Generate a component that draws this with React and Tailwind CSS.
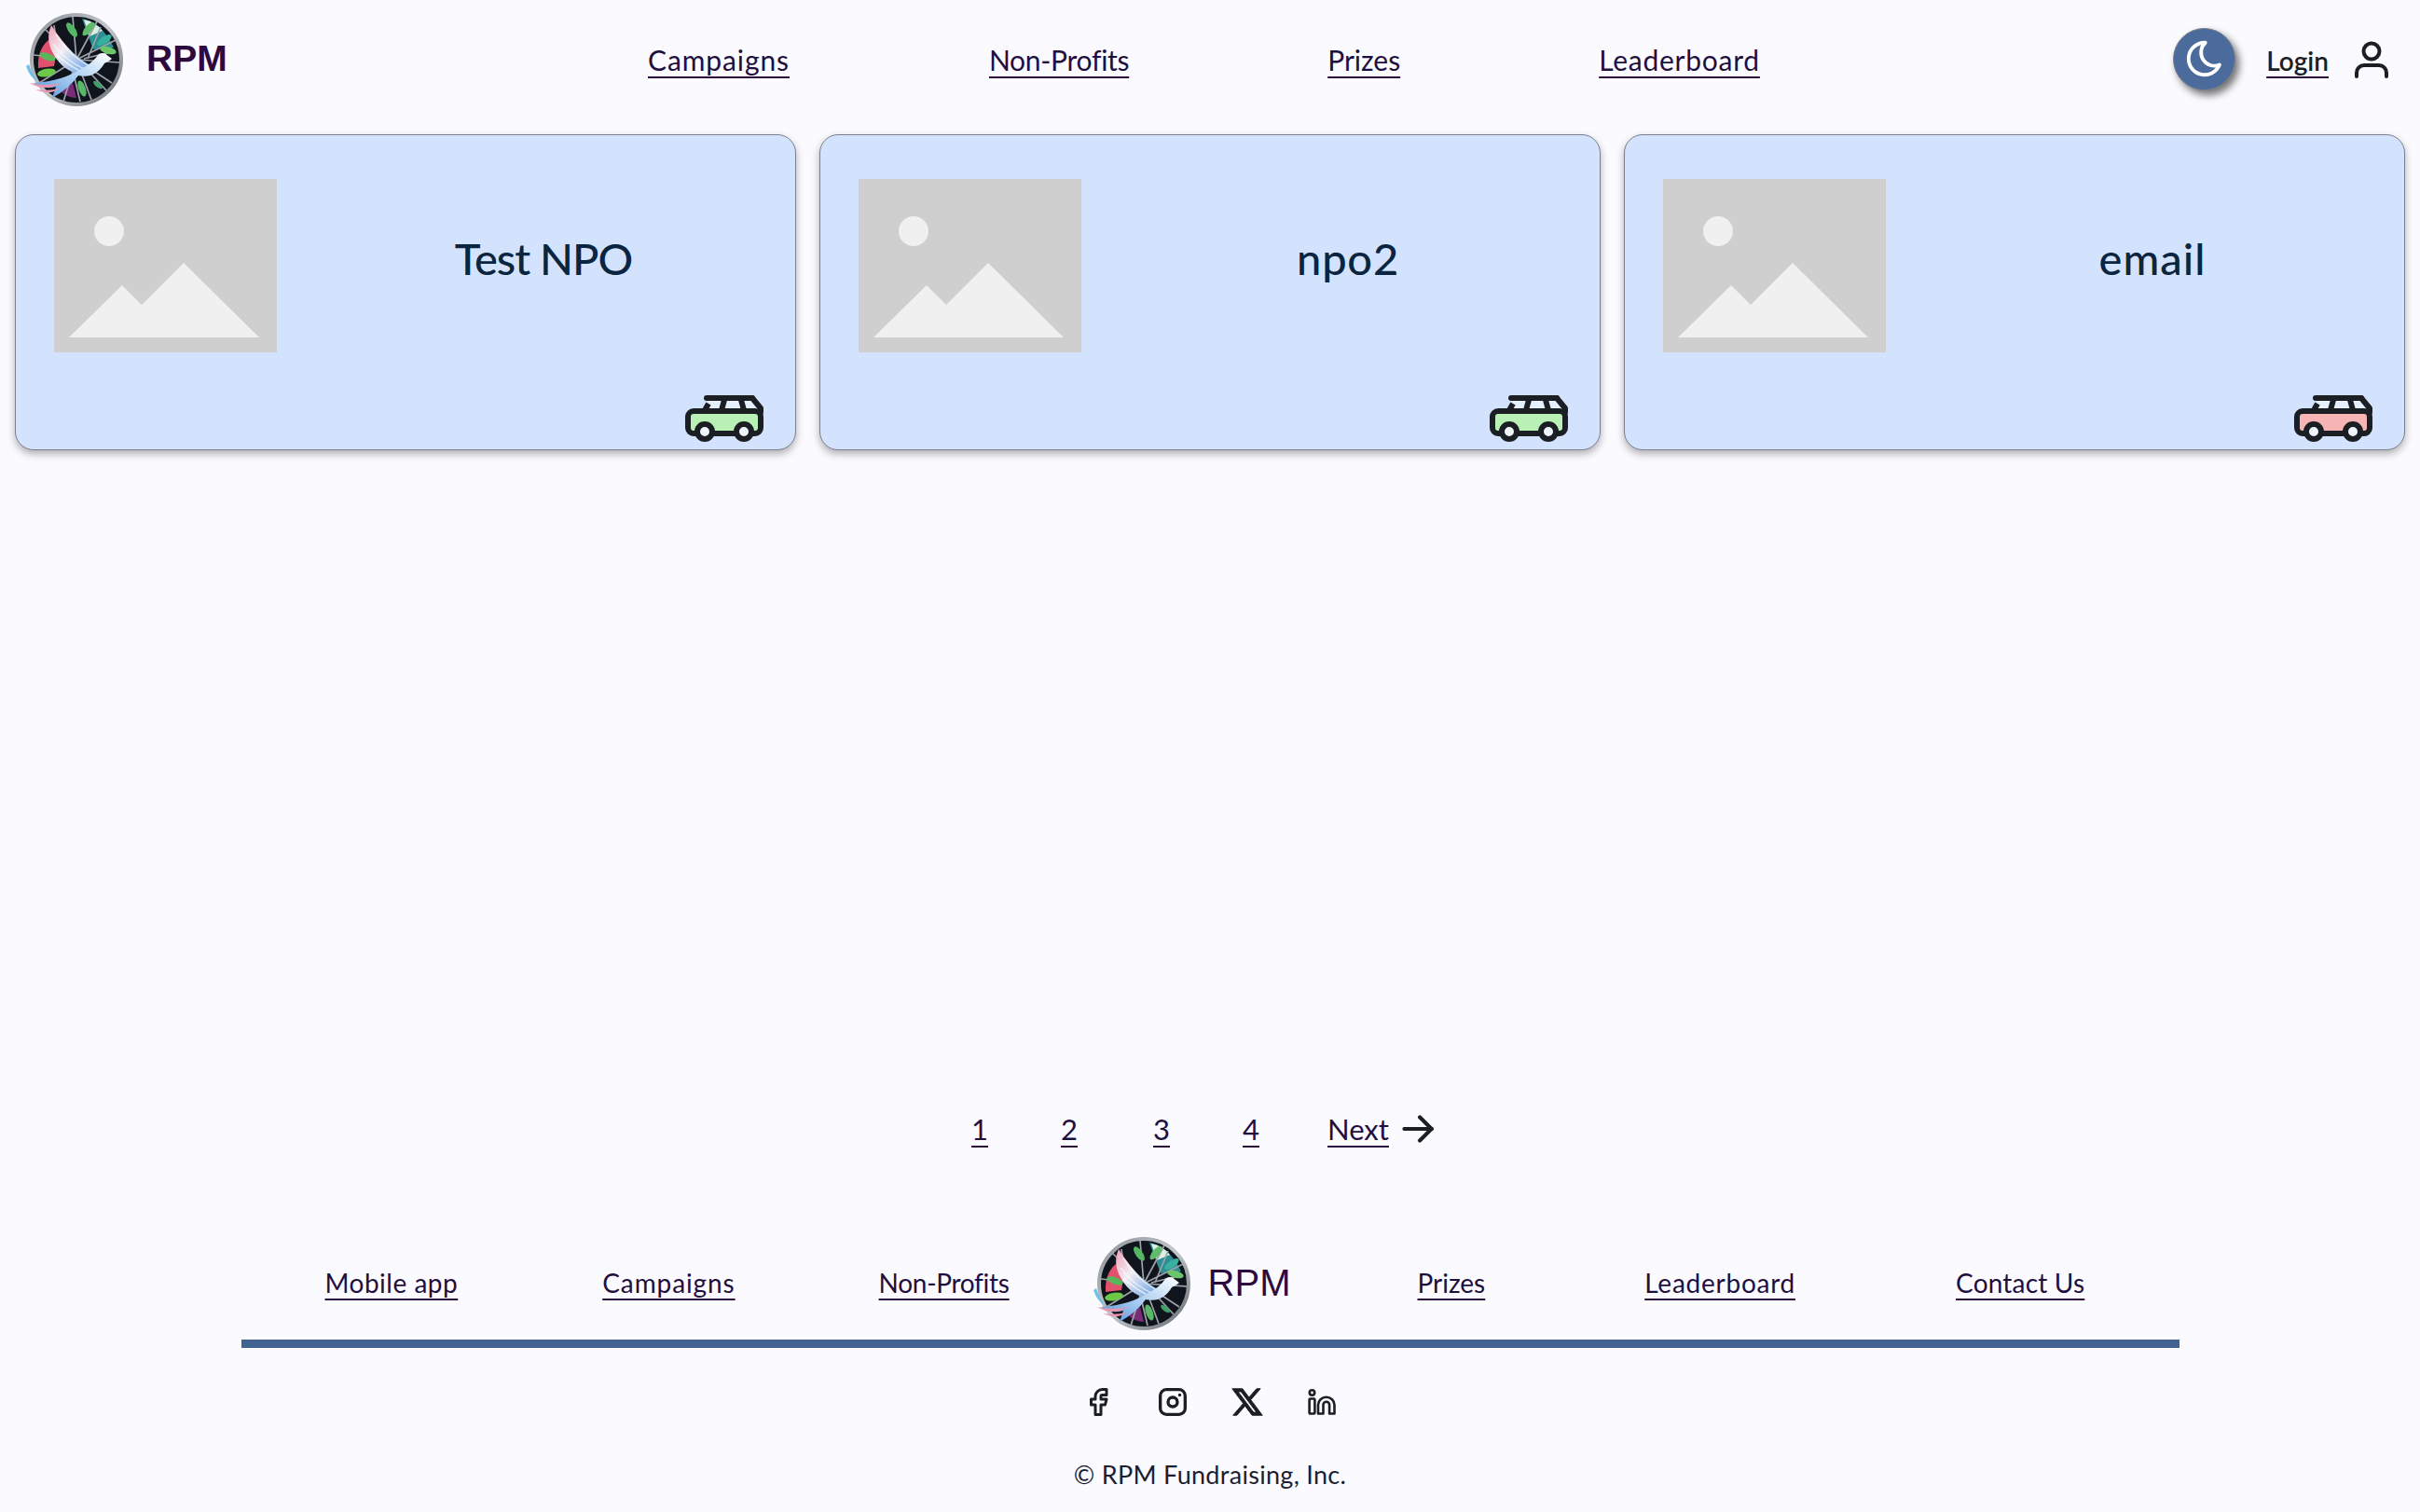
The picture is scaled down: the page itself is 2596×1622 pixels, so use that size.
import React from 'react';
import { TbArrowRight, TbBrandFacebook, TbBrandInstagram, TbMoon } from 'react-icons/tb';
import { RiTwitterXLine } from 'react-icons/ri';

const linkClass = 'text-[#1f0f3f] underline decoration-[#2d0a3d] decoration-2 underline-offset-[6px] whitespace-nowrap';

const Leaf = ({ x, y, r, c, l = 9 }) => (
  <ellipse cx={x} cy={y} rx={l} ry={l * 0.42} fill={c} transform={`rotate(${r} ${x} ${y})`} />
);

const Logo = ({ className }) => (
  <svg viewBox="0 0 106 104" className={className}>
    <defs>
      <linearGradient id="ring" x1="0" y1="0" x2="1" y2="1">
        <stop offset="0" stopColor="#8d9298" />
        <stop offset="0.5" stopColor="#c4c8cc" />
        <stop offset="1" stopColor="#63686e" />
      </linearGradient>
      <linearGradient id="wing" x1="0" y1="0" x2="1" y2="1">
        <stop offset="0" stopColor="#ee9fb4" />
        <stop offset="0.4" stopColor="#f2eef4" />
        <stop offset="1" stopColor="#4f94e0" />
      </linearGradient>
      <linearGradient id="body" x1="1" y1="0" x2="0" y2="1">
        <stop offset="0" stopColor="#ffffff" />
        <stop offset="0.6" stopColor="#9cc6ee" />
        <stop offset="1" stopColor="#4f8fd8" />
      </linearGradient>
    </defs>
    <circle cx="54" cy="51" r="48" fill="#10141d" stroke="url(#ring)" strokeWidth="4" />
    <path d="M24 30 Q12 40 13 60 L30 58 Q34 42 24 30Z" fill="#e2506e" />
    <path d="M60 7 Q82 12 94 38 L72 40Z" fill="#2b8f94" />
    <path d="M62 8 Q74 10 82 20 L68 26Z" fill="#dcefe4" />
    <path d="M36 84 Q44 92 54 92 L50 76Z" fill="#7a2c78" />
    <path d="M54 51L50 5M54 51L76 10M54 51L96 30M54 51L100 54M54 51L92 76M54 51L70 94M54 51L40 96M54 51L14 76M54 51L8 46M54 51L20 18M30 14L34 46M80 16L66 50M94 42L62 50M86 84L62 58M58 96L50 62" stroke="#9da2a8" strokeWidth="1.7" />
    <Leaf x={49} y={19} r={55} c="#55b764" />
    <Leaf x={67} y={18} r={-50} c="#5fbb6a" />
    <Leaf x={84} y={30} r={-35} c="#38b0a0" />
    <Leaf x={88} y={41} r={15} c="#6cc46c" />
    <Leaf x={23} y={48} r={20} c="#56b85a" />
    <Leaf x={22} y={65} r={-10} c="#6cc848" l={10} />
    <Leaf x={60} y={82} r={70} c="#58b868" />
    <Leaf x={77} y={78} r={40} c="#3f9e6a" l={6} />
    <path d="M72 58 Q50 50 27 14 Q20 30 30 46 Q40 64 62 68Z" fill="url(#wing)" />
    <path d="M32 24 Q44 44 66 57M29 34 Q42 52 64 62M33 46 Q46 58 62 65" fill="none" stroke="#ffffff" strokeWidth="1.1" opacity="0.8" />
    <path d="M56 68 Q74 72 84 55 Q90 52 92 50 L88 47 Q84 42 78 45 Q70 56 60 60 Q40 74 8 76 Q18 84 32 80 L28 92 Q46 82 56 68Z" fill="url(#body)" />
    <path d="M0 58 Q4 70 12 74 Q6 66 3 56Z" fill="#6cc3ea" />
    <path d="M4 76 Q20 86 38 76 Q22 80 4 76ZM10 83 Q24 90 36 82 Q24 85 10 83Z" fill="#eb94ae" />
  </svg>
);

const Placeholder = () => (
  <svg viewBox="0 0 239 186" className="w-[239px] h-[186px] shrink-0">
    <rect width="239" height="186" fill="#cfcfcf" />
    <circle cx="59" cy="56" r="16" fill="#f0f0f0" />
    <polygon points="16,170 73,114 94,135 139,90 220,170" fill="#f0f0f0" />
  </svg>
);

const Van = ({ fill }) => (
  <svg viewBox="0 0 84 50" className="absolute bottom-[8px] right-[34px] w-[84px] h-[50px]">
    <path d="M25 3H72L81 14V18H20L25 9" fill="#e6effd" stroke="#1b1f24" strokeWidth="6" strokeLinejoin="round" />
    <path d="M23 3H72" stroke="#1b1f24" strokeWidth="6" strokeLinecap="round" />
    <path d="M42 5L39 16M60 5L63 16" stroke="#1b1f24" strokeWidth="6" />
    <rect x="3" y="17" width="78" height="24" rx="6" fill={fill} stroke="#1b1f24" strokeWidth="6" />
    <circle cx="21" cy="39" r="8" fill="#f0f4fb" stroke="#1b1f24" strokeWidth="6" />
    <circle cx="63" cy="39" r="8" fill="#f0f4fb" stroke="#1b1f24" strokeWidth="6" />
  </svg>
);

const Card = ({ title, fill, className }) => (
  <div className="relative h-[339px] rounded-[20px] border border-[#7c7f8c] bg-[#d3e3fd] shadow-[0_4px_8px_rgba(0,0,0,0.3)] pt-[47px] pl-[41px] flex items-start">
    <Placeholder />
    <div className={`flex-1 h-[186px] flex items-center justify-center pl-4 pb-[16px] text-[47px] font-medium text-[#0b2540] ${className}`}>{title}</div>
    <Van fill={fill} />
  </div>
);

const App = () => {
  return (
    <div className="min-h-screen flex flex-col bg-[#fafaff] font-['Lato',sans-serif] text-[#1b1f24]">
      <header className="h-[130px] shrink-0 flex items-center pl-[28px] pr-[34px]">
        <Logo className="w-[106px] h-[104px] shrink-0" />
        <span className="ml-[23px] w-[100px] font-['Liberation_Sans',sans-serif] font-bold text-[39px] text-[#2d0a3d] -mt-[4px]">RPM</span>
        <nav className="flex items-center text-[30px] ml-[438px] -mt-[2px]">
          <a className={`${linkClass} tracking-[0.9px]`}>Campaigns</a>
          <a className={`${linkClass} ml-[214px] -tracking-[0.3px]`}>Non-Profits</a>
          <a className={`${linkClass} ml-[213px]`}>Prizes</a>
          <a className={`${linkClass} ml-[213px] tracking-[0.75px]`}>Leaderboard</a>
        </nav>
        <div className="ml-auto flex items-center">
          <button className="w-[67px] h-[67px] rounded-full bg-[#4a6b9c] border border-[#7b7f86] shadow-[4px_5px_8px_rgba(0,0,0,0.55)] flex items-center justify-center -mt-[4px]">
            <TbMoon className="text-white text-[46px]" />
          </button>
          <a className="ml-[33px] text-[28px] font-semibold text-[#1b1f24] underline decoration-[#2d0a3d] decoration-2 underline-offset-[6px]">Login</a>
          <svg viewBox="0 0 36 40" fill="none" stroke="#1b1f24" strokeWidth="4" strokeLinecap="round" className="ml-[28px] w-[36px] h-[40px] -mt-[2px]">
            <circle cx="18" cy="11" r="8.5" />
            <path d="M2 38v-4a8 8 0 0 1 8-8h16a8 8 0 0 1 8 8v4" />
          </svg>
        </div>
      </header>

      <main className="flex-1 flex flex-col mt-[14px]">
        <div className="grid grid-cols-3 gap-[25px] px-4">
          <Card title="Test NPO" fill="#b9f0b6" className="-tracking-[1px]" />
          <Card title="npo2" fill="#b9f0b6" className="tracking-[0.8px]" />
          <Card title="email" fill="#f6b4b4" className="tracking-[1px]" />
        </div>
        <div className="mt-auto flex items-center justify-center text-[31px] pb-[91px] pr-[8px]">
          <a className={linkClass}>1</a>
          <a className={`${linkClass} ml-[78px]`}>2</a>
          <a className={`${linkClass} ml-[81px] text-[#0b2540] decoration-[#0b2540]`}>3</a>
          <a className={`${linkClass} ml-[78px] text-[#0b2540] decoration-[#0b2540]`}>4</a>
          <a className={`${linkClass} ml-[73px]`}>Next</a>
          <TbArrowRight className="ml-[6px] text-[50px] -my-2" />
        </div>
      </main>

      <footer className="shrink-0 flex flex-col items-center pb-[20px]">
        <div className="w-[2079px] h-[120px] flex items-center text-[28px] pl-[90px] pb-[7px] border-b-[9px] border-[#426291]">
          <a className={`${linkClass} mb-[3px] tracking-[0.5px]`}>Mobile app</a>
          <a className={`${linkClass} mb-[3px] ml-[155px] tracking-[0.9px]`}>Campaigns</a>
          <a className={`${linkClass} mb-[3px] ml-[154px] -tracking-[0.3px]`}>Non-Profits</a>
          <Logo className="ml-[90px] w-[106px] h-[104px] shrink-0" />
          <span className="ml-[17px] font-['Liberation_Sans',sans-serif] text-[40px] text-[#2d0a3d] -mt-[4px]">RPM</span>
          <a className={`${linkClass} mb-[3px] ml-[136px]`}>Prizes</a>
          <a className={`${linkClass} mb-[3px] ml-[171px] tracking-[0.75px]`}>Leaderboard</a>
          <a className={`${linkClass} mb-[3px] ml-[172px] tracking-[0.2px]`}>Contact Us</a>
        </div>
        <div className="mt-[38px] flex items-center justify-center">
          <div className="w-[80px] flex justify-center"><TbBrandFacebook className="text-[36px]" /></div>
          <div className="w-[80px] flex justify-center"><TbBrandInstagram className="text-[40px]" /></div>
          <div className="w-[80px] flex justify-center"><RiTwitterXLine className="text-[38px]" stroke="currentColor" strokeWidth={0.6} /></div>
          <div className="w-[80px] flex justify-center">
            <svg viewBox="0 0 30 28" fill="none" stroke="#1b1f24" strokeWidth="2.6" strokeLinejoin="round" className="w-[30px] h-[28px]">
              <circle cx="4.5" cy="4" r="2.7" />
              <rect x="1.6" y="10.5" width="5.8" height="16" rx="1" />
              <path d="M11 26.5V17a8.5 8 0 0 1 17.5 0v9.5h-5.4V17a3.3 3.3 0 0 0-6.6 0v9.5Z" />
            </svg>
          </div>
        </div>
        <p className="mt-[38px] text-[27px] tracking-[0.3px] text-[#1b1f30]">© RPM Fundraising, Inc.</p>
      </footer>
    </div>
  );
};

export default App;
